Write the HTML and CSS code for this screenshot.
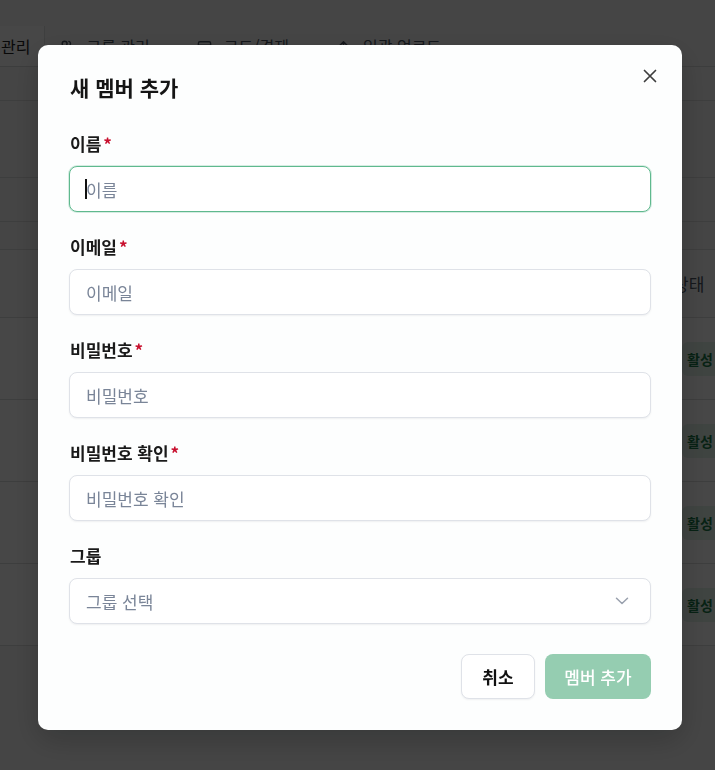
FILE: index.html
```html
<!DOCTYPE html>
<html lang="ko">
<head>
<meta charset="utf-8">
<title>새 멤버 추가</title>
<link rel="stylesheet" href="styles.css">
</head>
<body>
<div class="page">
  <nav class="tabs">
    <div class="tab tab-active">관리</div>
    <div class="tab">
      <svg class="tab-icon" viewBox="0 0 16 16" width="15" height="15"><circle cx="6" cy="5" r="2.6"/><path d="M1.5 13.5c0-2.6 2-4.3 4.5-4.3s4.5 1.7 4.5 4.3"/><path d="M10.5 2.6a2.5 2.5 0 0 1 0 4.8M12 9.6c1.6.5 2.6 1.9 2.6 3.9"/></svg>
      그룹 관리
    </div>
    <div class="tab">
      <svg class="tab-icon" viewBox="0 0 16 16" width="15" height="15"><rect x="1.5" y="3" width="13" height="10" rx="1.5"/><path d="M1.5 6.5h13"/></svg>
      코드/결제
    </div>
    <div class="tab">
      <svg class="tab-icon" viewBox="0 0 16 16" width="15" height="15"><path d="M8 13V3M4 7l4-4 4 4"/></svg>
      일괄 업로드
    </div>
  </nav>
  <div class="band band-a"></div>
  <div class="band band-b"></div>
  <div class="band band-c"></div>
  <div class="band band-d"></div>
  <div class="table">
    <div class="trow thead"><span class="status-cell"><span class="th">상태</span></span></div>
    <div class="trow"><span class="status-cell"><span class="badge">활성</span></span></div>
    <div class="trow"><span class="status-cell"><span class="badge">활성</span></span></div>
    <div class="trow"><span class="status-cell"><span class="badge">활성</span></span></div>
    <div class="trow"><span class="status-cell"><span class="badge">활성</span></span></div>
  </div>
</div>

<div class="overlay">
  <div class="modal" role="dialog" aria-labelledby="modal-title">
    <h2 class="modal-title" id="modal-title">새 멤버 추가</h2>
    <button class="close-btn" type="button" aria-label="닫기">
      <svg viewBox="0 0 14 14" width="14" height="14"><path d="M1.5 1.5l11 11M12.5 1.5l-11 11"/></svg>
    </button>
    <form class="form">
      <div class="field">
        <label class="label">이름<span class="req">*</span></label>
        <div class="control">
          <input class="input input-focused" type="text" placeholder="이름">
          <span class="caret"></span>
        </div>
      </div>
      <div class="field">
        <label class="label">이메일<span class="req">*</span></label>
        <div class="control"><input class="input" type="email" placeholder="이메일"></div>
      </div>
      <div class="field">
        <label class="label">비밀번호<span class="req">*</span></label>
        <div class="control"><input class="input" type="password" placeholder="비밀번호"></div>
      </div>
      <div class="field">
        <label class="label">비밀번호 확인<span class="req">*</span></label>
        <div class="control"><input class="input" type="password" placeholder="비밀번호 확인"></div>
      </div>
      <div class="field">
        <label class="label">그룹</label>
        <div class="control">
          <div class="input select">
            <span class="select-placeholder">그룹 선택</span>
            <svg class="chevron" viewBox="0 0 14 8" width="14" height="8"><path d="M1.5 1.2L7 6.5l5.5-5.3"/></svg>
          </div>
        </div>
      </div>
      <div class="actions">
        <button class="btn btn-ghost" type="button">취소</button>
        <button class="btn btn-primary" type="button">멤버 추가</button>
      </div>
    </form>
  </div>
</div>
</body>
</html>
```

FILE: styles.css
```css
html, body {
  margin: 0;
  padding: 0;
  overflow: hidden;
}
body {
  font-family: "Noto Sans CJK KR", "Noto Sans", sans-serif;
  background: #f7f8f8;
  width: 715px;
  height: 770px;
}

/* ---------- background page ---------- */
.page {
  width: 715px;
  height: 770px;
  background: #f7f8f8;
  overflow: hidden;
}
.tabs {
  height: 67px;
  box-sizing: border-box;
  border-bottom: 1px solid #d8dbdb;
  display: flex;
  align-items: flex-end;
}
.tab {
  height: 40px;
  display: flex;
  align-items: center;
  gap: 12px;
  font-size: 16px;
  color: #4b5563;
  padding: 0 15px 0 14px;
  margin-right: 18px;
  white-space: nowrap;
  flex-shrink: 0;
}
.tab-active {
  background: #ffffff;
  padding: 0 14px 0 1px;
  margin-right: 0;
  border-right: 1px solid #dfe1e1;
  color: #222;
}
.tab-icon {
  fill: none;
  stroke: #4b5563;
  stroke-width: 1.5;
  stroke-linecap: round;
  stroke-linejoin: round;
}
.band {
  border-bottom: 1px solid #dcdede;
  box-sizing: border-box;
}
.band-a { height: 34px; }
.band-b { height: 77px; }
.band-c { height: 44px; }
.band-d { height: 27px; border-bottom: none; }
.table {
  border-top: 1px solid #dcdede;
  width: 760px;
}
.trow {
  height: 82px;
  box-sizing: border-box;
  border-bottom: 1px solid #dcdede;
  display: flex;
  align-items: center;
  background: #ffffff;
}
.thead {
  height: 68px;
  background: #f9fafa;
}
.status-cell {
  margin-left: 673px;
  display: flex;
  align-items: center;
  flex-shrink: 0;
  white-space: nowrap;
}
.th {
  font-size: 17px;
  color: #4b5563;
}
.badge {
  margin-left: 9px;
  height: 34px;
  display: flex;
  align-items: center;
  padding: 0 12px 0 5px;
  background: #e3f3ea;
  color: #1c7a49;
  font-size: 14px;
  font-weight: 700;
  border-radius: 6px;
  white-space: nowrap;
}

/* ---------- overlay & modal ---------- */
.overlay {
  position: fixed;
  inset: 0;
  background: rgba(0, 0, 0, 0.72);
  display: flex;
  align-items: center;
  justify-content: center;
}
.modal {
  position: relative;
  width: 644px;
  box-sizing: border-box;
  margin-left: 5px;
  margin-top: 5px;
  padding: 27px 31px 31px 31px;
  background: #fdfefe;
  border-radius: 10px;
  box-shadow: 0 10px 30px rgba(0, 0, 0, 0.2);
}
.modal-title {
  margin: 0;
  font-size: 21px;
  line-height: 30px;
  font-weight: 700;
  color: #151515;
  padding-left: 1px;
}
.close-btn {
  position: absolute;
  top: 19px;
  right: 20px;
  width: 24px;
  height: 24px;
  padding: 0;
  border: none;
  background: transparent;
  display: flex;
  align-items: center;
  justify-content: center;
  cursor: pointer;
}
.close-btn svg {
  fill: none;
  stroke: #3d3d3d;
  stroke-width: 1.7;
  stroke-linecap: round;
}
.form {
  margin: 30px 0 0 0;
  display: flex;
  flex-direction: column;
  gap: 23px;
}
.field {
  display: flex;
  flex-direction: column;
  gap: 10px;
}
.label {
  font-size: 17px;
  line-height: 24px;
  font-weight: 600;
  color: #1a1a1a;
  padding-left: 1px;
}
.req {
  color: #c8102e;
  margin-left: 2px;
  font-weight: 700;
}
.control {
  position: relative;
}
.input {
  width: 100%;
  height: 46px;
  box-sizing: border-box;
  border: 1px solid #dfe2e8;
  border-radius: 8px;
  background: #ffffff;
  padding: 0 16px;
  font-family: "Noto Sans CJK KR", "Noto Sans", sans-serif;
  font-size: 17px;
  color: #1a1a1a;
  box-shadow: 0 1px 2px rgba(16, 24, 40, 0.06);
  outline: none;
  display: block;
}
.input::placeholder {
  color: #7a8598;
}
.input-focused {
  border: 1.5px solid #5fb98e;
  box-shadow: 0 0 0 1px rgba(95, 185, 142, 0.25);
}
.caret {
  position: absolute;
  left: 16px;
  top: 13px;
  width: 1.5px;
  height: 20px;
  background: #111;
}
.select {
  display: flex;
  align-items: center;
  justify-content: space-between;
  padding-right: 21px;
}
.select-placeholder {
  color: #7a8598;
}
.chevron {
  fill: none;
  stroke: #9aa1ae;
  stroke-width: 1.5;
  stroke-linecap: round;
  stroke-linejoin: round;
}
.actions {
  margin-top: 7px;
  display: flex;
  justify-content: flex-end;
  gap: 10px;
}
.btn {
  height: 45px;
  border-radius: 8px;
  font-family: "Noto Sans CJK KR", "Noto Sans", sans-serif;
  font-size: 17px;
  padding: 0;
  cursor: pointer;
}
.btn-ghost {
  width: 74px;
  background: #ffffff;
  border: 1px solid #dfe2e8;
  color: #111;
  font-weight: 700;
  box-shadow: 0 1px 2px rgba(16, 24, 40, 0.06);
}
.btn-primary {
  width: 106px;
  background: #95cdb1;
  border: none;
  color: #ffffff;
  font-weight: 500;
}
```
